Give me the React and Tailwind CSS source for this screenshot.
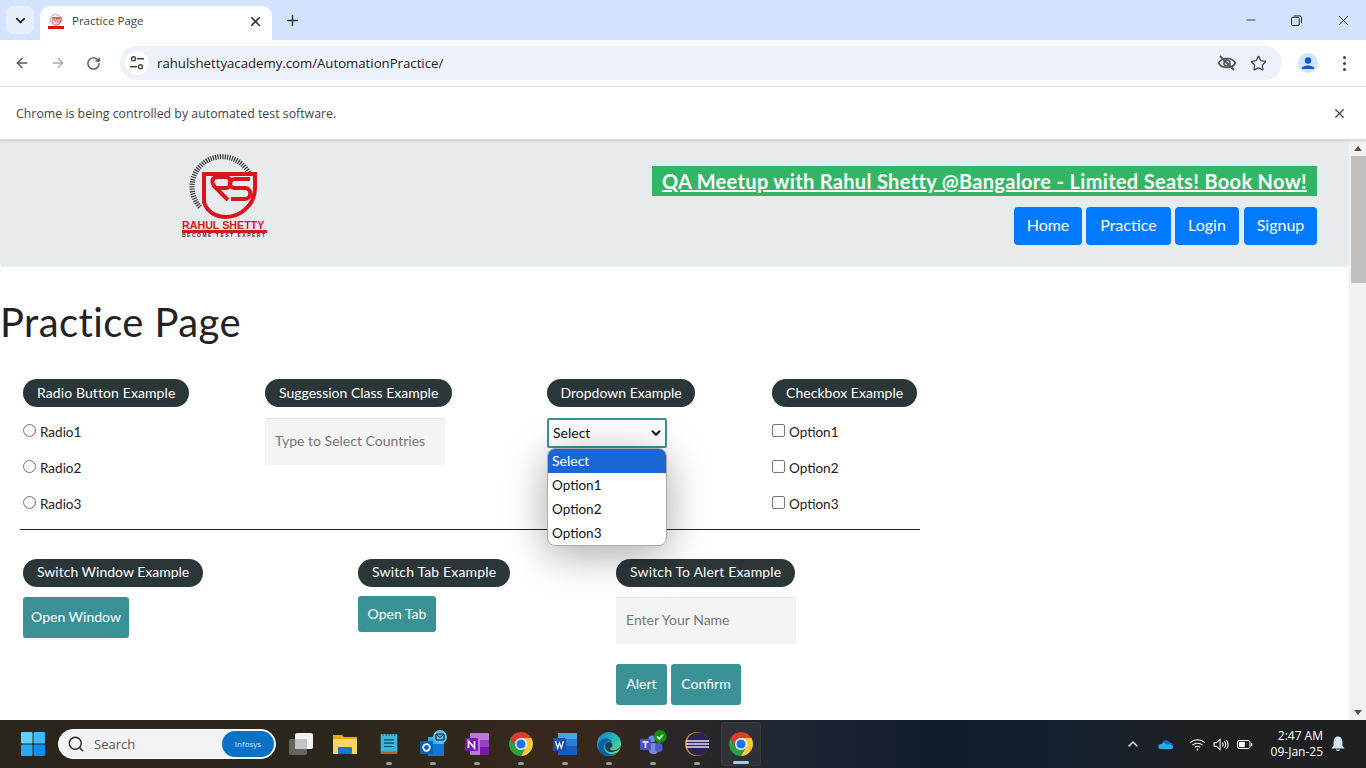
import { useState } from "react";
import { ArrowLeft, ArrowRight, ChevronDown, ChevronUp, Plus, RotateCw, Star, X, Minus, Search } from "lucide-react";

const pageFont = "font-['Lato',sans-serif]";

/* ---------- drawn icons ---------- */
const LogoMark = ({ className }) => (
  <svg viewBox="0 0 90 70" className={className}>
    <path d="M20 57 A30 30 0 1 1 72 35" fill="none" stroke="#333" strokeWidth="5" strokeDasharray="1.2 1.2" />
    <path d="M24 24 H75 V38 C75 55 60 67 46 67 C36 67 27 62 24 52 Z" fill="#e7ebee" stroke="#d9161d" strokeWidth="4" />
    <path d="M36 38 C30 32 32 27 38 27 H46 C52 27 52 38 46 38 H36 L48 50" fill="none" stroke="#d9161d" strokeWidth="4" />
    <path d="M70 29 H55 C48 29 48 38 55 38 H65 C72 38 72 49 65 49 H51" fill="none" stroke="#d9161d" strokeWidth="4" />
  </svg>
);

const Logo = () => (
  <div className="w-[90px] flex flex-col items-start font-['Liberation_Sans',sans-serif]">
    <LogoMark className="w-[90px] h-[70px] shrink-0" />
    <span className="ml-[2px] h-[10px] leading-[11px] text-[10.7px] font-bold text-[#d9161d] whitespace-nowrap">RAHUL SHETTY</span>
    <span className="ml-[2px] w-[85px] h-[3px] bg-[#d9161d]" />
    <span className="ml-[2px] h-[5px] leading-[5px] text-[5px] font-bold text-[#333] tracking-[1.5px] whitespace-nowrap">BECOME TEST EXPERT</span>
  </div>
);

const Favicon = () => (
  <div className="w-4 h-4 flex flex-col shrink-0">
    <LogoMark className="w-4 h-[13px]" />
    <span className="w-4 h-[3px] bg-[#d9161d]" />
  </div>
);

const ChromeIcon = ({ size = 24 }) => (
  <svg viewBox="0 0 24 24" width={size} height={size}>
    <path d="M22.39 6 A12 12 0 0 0 1.61 6 L7 15 L12 12 L12 6 Z" fill="#e33b2e" />
    <path d="M1.61 6 A12 12 0 0 0 12 24 L17 15 L12 12 L7 15 Z" fill="#2c9f45" />
    <path d="M12 24 A12 12 0 0 0 22.39 6 H12 L12 12 L17 15 Z" fill="#fcc934" />
    <circle cx="12" cy="12" r="6" fill="#fff" />
    <circle cx="12" cy="12" r="4.6" fill="#1a73e8" />
  </svg>
);

const TuneIcon = () => (
  <svg viewBox="0 0 16 16" className="w-4 h-4" fill="none" stroke="#444" strokeWidth="1.4">
    <circle cx="4.5" cy="3.8" r="2" />
    <path d="M8 3.8 H15 M1 11.8 H8" />
    <circle cx="11.5" cy="11.8" r="2" />
  </svg>
);

const EyeOffIcon = () => (
  <svg viewBox="0 0 20 20" className="w-5 h-5" fill="none" stroke="#555" strokeWidth="1.6">
    <path d="M1.5 10 C5 4 15 4 18.5 10 C15 16 5 16 1.5 10 Z" />
    <circle cx="10" cy="10" r="3" />
    <path d="M3 3 L17 17" strokeWidth="2" />
  </svg>
);

const WinRestore = () => (
  <svg viewBox="0 0 12 12" className="w-[11px] h-[11px]" fill="none" stroke="#111" strokeWidth="1">
    <rect x="0.5" y="2.5" width="8.5" height="9" rx="1.5" />
    <path d="M3 1 H9.5 A2 2 0 0 1 11.5 3 V9" />
  </svg>
);

const UserIcon = () => (
  <div className="w-5 h-5 rounded-full bg-[#d3e3fd] flex items-center justify-center">
    <svg viewBox="0 0 20 20" className="w-5 h-5" fill="#0b57d0">
      <circle cx="10" cy="7.5" r="3.2" />
      <path d="M3.8 15 C4.5 11.6 15.5 11.6 16.2 15 V16 H3.8 Z" />
    </svg>
  </div>
);

const WindowsIcon = () => (
  <svg viewBox="0 0 24 24" className="w-6 h-6">
    <rect x="0" y="0" width="11.5" height="11.5" rx="1" fill="#5fd0fb" />
    <rect x="12.5" y="0" width="11.5" height="11.5" rx="1" fill="#3bbcf8" />
    <rect x="0" y="12.5" width="11.5" height="11.5" rx="1" fill="#2aa9f5" />
    <rect x="12.5" y="12.5" width="11.5" height="11.5" rx="1" fill="#0f8ff0" />
  </svg>
);

const TaskViewIcon = () => (
  <svg viewBox="0 0 24 24" className="w-6 h-6">
    <rect x="6" y="1" width="18" height="16" rx="2" fill="#f2f2f2" />
    <rect x="0" y="7" width="18" height="16" rx="2" fill="#6d6d6d" fillOpacity="0.9" />
    <rect x="6" y="7" width="12" height="10" fill="#c4c4c4" />
  </svg>
);

const FolderIcon = () => (
  <svg viewBox="0 0 24 24" className="w-6 h-6">
    <path d="M0 3 H9 L11 5 H24 V22 H0 Z" fill="#e8a910" />
    <rect x="0" y="7" width="24" height="15" rx="1" fill="#fcd661" />
    <rect x="5" y="15" width="14" height="7" rx="1" fill="#1479c9" />
  </svg>
);

const NotepadIcon = () => (
  <svg viewBox="0 0 24 28" className="w-[20px] h-6">
    <rect x="2" y="2" width="20" height="23" rx="1" fill="#3cb4dc" />
    <rect x="2" y="23" width="20" height="3" fill="#a8672c" />
    <path d="M5 1 V4 M8.5 1 V4 M12 1 V4 M15.5 1 V4 M19 1 V4" stroke="#0d4a60" strokeWidth="1.2" />
    <path d="M6 9 H18 M6 13 H18 M6 17 H18" stroke="#0d4a60" strokeWidth="1.4" />
  </svg>
);

const OutlookIcon = () => (
  <svg viewBox="0 0 28 28" className="w-7 h-7">
    <rect x="9" y="7" width="16" height="10" fill="#28a8ea" />
    <path d="M9 14 L25 14 V26 H9 Z" fill="#0f78d4" />
    <rect x="1" y="11" width="13" height="13" rx="1" fill="#0a64ad" />
    <circle cx="7.5" cy="17.5" r="3.3" fill="none" stroke="#fff" strokeWidth="1.7" />
    <circle cx="21" cy="7" r="7" fill="#59c6f2" />
    <rect x="17" y="4" width="8" height="6" rx="1" fill="none" stroke="#111" strokeWidth="1.1" />
    <path d="M17.5 4.5 L21 7.5 L24.5 4.5" fill="none" stroke="#111" strokeWidth="1" />
  </svg>
);

const OneNoteIcon = () => (
  <svg viewBox="0 0 24 24" className="w-6 h-6">
    <rect x="5" y="1" width="19" height="22" rx="1" fill="#ba77dd" />
    <rect x="15" y="8" width="9" height="7" fill="#9a3fc0" />
    <rect x="15" y="15" width="9" height="8" fill="#7719aa" />
    <rect x="0" y="6" width="13" height="13" rx="1" fill="#7719aa" />
    <path d="M3.5 16 V9 L9.5 16 V9" fill="none" stroke="#fff" strokeWidth="1.6" />
  </svg>
);

const WordIcon = () => (
  <svg viewBox="0 0 24 24" className="w-6 h-6">
    <rect x="5" y="1" width="19" height="6" fill="#41a5ee" />
    <rect x="5" y="7" width="19" height="7" fill="#2b7cd3" />
    <rect x="5" y="14" width="19" height="9" fill="#185abd" />
    <rect x="0" y="6" width="13" height="13" rx="1" fill="#1a4ea8" />
    <path d="M2.5 9 L4.7 16 L6.5 11 L8.3 16 L10.5 9" fill="none" stroke="#fff" strokeWidth="1.3" />
  </svg>
);

const EdgeIcon = () => (
  <svg viewBox="0 0 24 24" className="w-6 h-6">
    <defs>
      <linearGradient id="edgeTop" x1="0" y1="0" x2="1" y2="1">
        <stop offset="0" stopColor="#0c7fd0" />
        <stop offset="0.6" stopColor="#2fc3b0" />
        <stop offset="1" stopColor="#7fe06a" />
      </linearGradient>
    </defs>
    <circle cx="12" cy="12" r="12" fill="url(#edgeTop)" />
    <path d="M1 13 C3 5 13 4 15 11 C14 9 8 8 7 14 C6 20 14 25 20 20 C15 27 1 25 1 13 Z" fill="#0c5ea8" />
    <path d="M8 14 C8 9 15 9 15.5 13 C16 16 12 15 13 17 C14 19 20 19 24 14 C22 21 8 23 8 14 Z" fill="#2b3a4a" />
  </svg>
);

const TeamsIcon = () => (
  <svg viewBox="0 0 30 28" className="w-[30px] h-7">
    <circle cx="14" cy="9" r="3.5" fill="#7b83eb" />
    <circle cx="21" cy="10" r="2.6" fill="#5059c9" />
    <rect x="11" y="13" width="9" height="11" rx="4" fill="#7b83eb" />
    <rect x="17" y="13" width="7.5" height="9" rx="3.5" fill="#5059c9" />
    <rect x="2" y="9" width="11" height="11" rx="1" fill="#4b53bc" />
    <path d="M4.5 12 H10.5 M7.5 12 V18" stroke="#fff" strokeWidth="1.5" />
    <circle cx="22" cy="6.5" r="6.5" fill="#12900f" />
    <path d="M19 6.5 L21.3 8.8 L25 4.8" fill="none" stroke="#fff" strokeWidth="1.5" />
  </svg>
);

const EclipseIcon = () => (
  <svg viewBox="0 0 24 24" className="w-6 h-6">
    <circle cx="12" cy="12" r="12" fill="#e08a1e" />
    <circle cx="13" cy="12" r="11.5" fill="#2c2255" />
    <path d="M1 9 H24 M1 12 H24 M1 15 H24" stroke="#e5e0f0" strokeWidth="1.6" />
  </svg>
);

const OneDriveIcon = () => (
  <svg viewBox="0 0 20 14" className="w-4 h-[11px]">
    <path d="M5 5 C6 1 12 0 14 4 C17 4 19 6 18.5 8 H8 Z" fill="#0f6cbd" />
    <path d="M3.5 13 C-1 13 -1 6.5 4 6.5 C6 4 10 5 11 7 C14 6 19 7 19 10 C19 12 18 13 16 13 Z" fill="#28a8ea" />
  </svg>
);

const WifiIcon = () => (
  <svg viewBox="0 0 18 14" className="w-[17px] h-[13px]" fill="none" stroke="#fff" strokeWidth="1.1">
    <path d="M1 5 C5.5 0.8 12.5 0.8 17 5" />
    <path d="M3.5 7.6 C6.5 5 11.5 5 14.5 7.6" />
    <path d="M6 10 C7.8 8.7 10.2 8.7 12 10" />
    <circle cx="9" cy="12.4" r="1" fill="#fff" stroke="none" />
  </svg>
);

const VolumeIcon = () => (
  <svg viewBox="0 0 18 14" className="w-[17px] h-[13px]" fill="none" stroke="#fff" strokeWidth="1.1">
    <path d="M1 5 H3.5 L7.5 1.5 V12.5 L3.5 9 H1 Z" />
    <path d="M10 5 C11 6.2 11 7.8 10 9 M12 3.5 C13.8 5.5 13.8 8.5 12 10.5 M14 2 C16.6 5 16.6 9 14 12" />
  </svg>
);

const BatteryIcon = () => (
  <svg viewBox="0 0 18 12" className="w-4 h-[11px]" fill="none" stroke="#fff" strokeWidth="1.1">
    <rect x="0.6" y="1.5" width="14" height="9" rx="2" />
    <rect x="2.2" y="3" width="6.5" height="6" fill="#fff" stroke="none" />
    <path d="M16.4 4.5 V7.5" strokeWidth="1.5" />
  </svg>
);

const BellIcon = () => (
  <svg viewBox="0 0 14 16" className="w-[14px] h-4" fill="#cfe6f2">
    <path d="M7 0.5 C10 0.5 11.4 3 11.4 6 V9.5 L13.5 12.5 H0.5 L2.6 9.5 V6 C2.6 3 4 0.5 7 0.5 Z" />
    <path d="M5 13.5 H9 C8.8 15.5 5.2 15.5 5 13.5 Z" />
  </svg>
);

/* ---------- browser chrome ---------- */
const TabBar = () => (
  <div className="h-10 bg-[#d3e3fd] flex items-end shrink-0 font-['Open_Sans',sans-serif]">
    <div className="w-7 h-7 ml-[6px] mb-[6px] rounded-lg bg-[#e7effd] flex items-center justify-center">
      <ChevronDown size={15} strokeWidth={2.6} className="text-[#222]" />
    </div>
    <div className="w-[232px] h-[34px] ml-[6px] bg-white rounded-t-[10px] flex items-center pl-2 pr-[9px] pb-1">
      <Favicon />
      <span className="ml-2 text-[11.5px] text-[#444] flex-1">Practice Page</span>
      <X size={15} strokeWidth={2.4} className="text-[#222]" />
    </div>
    <Plus size={17} strokeWidth={2} className="text-[#333] ml-3 mb-[11px]" />
    <div className="flex-1" />
    <div className="flex items-center self-stretch">
      <Minus size={14} strokeWidth={1.3} className="text-[#111] mr-[33px]" />
      <div className="mr-[33px]"><WinRestore /></div>
      <X size={17} strokeWidth={1.2} className="text-[#111] mr-[14px]" />
    </div>
  </div>
);

const Toolbar = () => (
  <div className="h-[47px] bg-white border-b border-[#e0e0e0] rounded-tr-lg flex items-center shrink-0 font-['Open_Sans',sans-serif]">
    <ArrowLeft size={16} strokeWidth={2} className="text-[#555] ml-[14px]" />
    <ArrowRight size={16} strokeWidth={2} className="text-[#aaa] ml-5" />
    <RotateCw size={15} strokeWidth={2.2} className="text-[#555] ml-[20px]" />
    <div className="ml-[19px] w-[1162px] h-[34px] rounded-full bg-[#ecf1fa] flex items-center pl-[5px] pr-[15px]">
      <div className="w-6 h-6 rounded-full bg-white flex items-center justify-center"><TuneIcon /></div>
      <span className="ml-2 pt-[1px] text-[13.2px] text-[#222] flex-1">rahulshettyacademy.com/AutomationPractice/</span>
      <EyeOffIcon />
      <Star size={17} strokeWidth={1.8} className="text-[#444] ml-[13px]" />
    </div>
    <div className="ml-4"><UserIcon /></div>
    <div className="ml-[25px] flex flex-col gap-[3px]">
      <span className="w-[3px] h-[3px] rounded-full bg-[#444]" />
      <span className="w-[3px] h-[3px] rounded-full bg-[#444]" />
      <span className="w-[3px] h-[3px] rounded-full bg-[#444]" />
    </div>
  </div>
);

const InfoBar = () => (
  <div className="h-[53px] bg-white border-b border-[#dcdcdc] flex items-center justify-between pl-4 pr-[19px] shrink-0 font-['Open_Sans',sans-serif] shadow-[0_1px_2px_rgba(0,0,0,0.15)] relative z-10">
    <span className="text-[12.35px] text-[#444] pt-[2px]">Chrome is being controlled by automated test software.</span>
    <X size={15} strokeWidth={2} className="text-[#444]" />
  </div>
);

/* ---------- page ---------- */
const Pill = ({ children, className = "" }) => (
  <div className={`inline-flex items-center justify-center h-7 rounded-full bg-[#2b3638] text-white text-sm whitespace-nowrap ${className}`}>
    {children}
  </div>
);

const TealButton = ({ children, className = "" }) => (
  <button className={`bg-[#3a9297] text-white text-sm rounded-[3px] ${className}`}>{children}</button>
);

const NavButton = ({ children, className = "" }) => (
  <button className={`h-[38px] rounded bg-[#007bff] text-white text-base pb-[2px] ${className}`}>{children}</button>
);

const radios = ["Radio1", "Radio2", "Radio3"];
const checks = ["Option1", "Option2", "Option3"];

const ChoiceList = ({ items, box }) => (
  <div className="flex flex-col gap-[18px] mt-4">
    {items.map((label) => (
      <div key={label} className="h-[18px] flex items-center text-[13.5px] text-[#222]">
        <span className={`w-[13px] h-[13px] border border-[#767676] bg-white -mt-[3px] ${box ? "rounded-[2px]" : "rounded-full"}`} />
        <span className="ml-1">{label}</span>
      </div>
    ))}
  </div>
);

const Dropdown = () => {
  const [value] = useState("Select");
  return (
    <div className="relative mt-[11px] w-[120px]">
      <div className="h-[30px] border-2 border-[#3a9297] rounded-[2px] bg-white flex items-center justify-between pl-1 pr-[2px] text-sm text-[#111]">
        <span>{value}</span>
        <ChevronDown size={14} strokeWidth={3.4} className="text-[#111]" />
      </div>
      <div className="absolute z-20 left-0 top-[30px] w-[120px] h-[98px] bg-white rounded-lg border border-[#aaa] overflow-hidden text-[13.5px] text-[#111] shadow-[0_8px_40px_rgba(0,0,0,0.35)]">
        <div className="h-6 pl-1 flex items-center bg-[#1b66d6] text-white text-sm">Select</div>
        {checks.map((o) => (
          <div key={o} className="h-6 pl-1 flex items-center">{o}</div>
        ))}
      </div>
    </div>
  );
};

const Header = () => (
  <div className="h-[127px] bg-[#e7ebee] rounded-b-[4px] flex justify-between shrink-0">
    <div className="ml-[180px] mt-[10px]"><Logo /></div>
    <div className="mr-[32px] mt-[26px] flex flex-col items-end">
      <a className="h-[30px] px-[10px] bg-[#33b566] text-white text-[20px] font-bold leading-[30px] tracking-[0.33px] underline whitespace-nowrap">
        QA Meetup with Rahul Shetty @Bangalore - Limited Seats! Book Now!
      </a>
      <div className="flex gap-1 mt-[11px]">
        <NavButton className="w-[68px]">Home</NavButton>
        <NavButton className="w-[85px]">Practice</NavButton>
        <NavButton className="w-[64px]">Login</NavButton>
        <NavButton className="w-[73px] ml-[1px]">Signup</NavButton>
      </div>
    </div>
  </div>
);

const inputClass = "block w-[180px] h-[47px] px-[10px] pb-[2px] bg-[#f4f4f4] rounded-[2px] text-sm placeholder:text-[#777] shadow-[inset_0_1px_1px_rgba(0,0,0,0.06)]";

const Practice = () => (
  <div className={`flex-1 min-w-0 overflow-hidden bg-white ${pageFont}`}>
    <Header />
    <h1 className="text-[40px] leading-[48px] tracking-[0.4px] text-[#222] mt-[31px]">Practice Page</h1>
    <div className="ml-5 w-[900px] mt-[33px]">
      <div className="pl-[3px] h-[151px] border-b border-[#222] flex items-start">
        <div className="w-[242px]">
          <Pill className="px-[14px] tracking-[0.1px]">Radio Button Example</Pill>
          <ChoiceList items={radios} />
        </div>
        <div className="w-[282px]">
          <Pill className="px-[14px]">Suggession Class Example</Pill>
          <input placeholder="Type to Select Countries" className={`mt-[11px] ${inputClass}`} />
        </div>
        <div className="w-[225px]">
          <Pill className="px-[13.5px]">Dropdown Example</Pill>
          <Dropdown />
        </div>
        <div>
          <Pill className="px-[14px] tracking-[0.05px]">Checkbox Example</Pill>
          <ChoiceList items={checks} box />
        </div>
      </div>
      <div className="pl-[3px] mt-[29px] flex items-start">
        <div className="w-[335px]">
          <Pill className="px-[14px] pb-[2px]">Switch Window Example</Pill>
          <TealButton className="block mt-[10px] w-[106px] h-[41px] pb-[2px]">Open Window</TealButton>
        </div>
        <div className="w-[258px]">
          <Pill className="px-[14px] pb-[2px] tracking-[0.15px]">Switch Tab Example</Pill>
          <TealButton className="block mt-[9px] w-[78px] h-9">Open Tab</TealButton>
        </div>
        <div>
          <Pill className="px-[14px] pb-[2px] tracking-[0.15px]">Switch To Alert Example</Pill>
          <input placeholder="Enter Your Name" className={`mt-[10px] ${inputClass}`} />
          <div className="flex gap-1 mt-5">
            <TealButton className="w-[51px] h-[41px] pb-[2px]">Alert</TealButton>
            <TealButton className="w-[70px] h-[41px] pb-[2px]">Confirm</TealButton>
          </div>
        </div>
      </div>
    </div>
  </div>
);

const Scrollbar = () => (
  <div className="w-[17px] bg-[#f1f1f1] flex flex-col items-end shrink-0">
    <div className="w-full h-[16px] flex items-center justify-center">
      <div className="w-0 h-0 border-x-[4px] border-x-transparent border-b-[5px] border-b-[#505050]" />
    </div>
    <div className="w-[15px] h-[127px] bg-[#c1c1c1]" />
    <div className="flex-1" />
    <div className="w-full h-[16px] flex items-center justify-center">
      <div className="w-0 h-0 border-x-[4px] border-x-transparent border-t-[5px] border-t-[#505050]" />
    </div>
  </div>
);

/* ---------- taskbar ---------- */
const TaskIcon = ({ children, dot = true, active }) => (
  <div className={`relative h-11 flex items-center justify-center rounded ${active ? "w-10 mx-[2px] bg-white/5 border border-white/5" : "w-11"}`}>
    {children}
    {dot && (
      <span className={`absolute bottom-[1px] left-1/2 -translate-x-1/2 h-[3px] rounded-full ${active ? "w-4 bg-[#a8cbe0]" : "w-[6px] bg-[#9a9a9a]"}`} />
    )}
  </div>
);

const Taskbar = () => (
  <div className="h-12 shrink-0 flex items-center bg-[linear-gradient(90deg,#2a261c_0%,#2b271c_25%,#38281c_42%,#1d2632_58%,#111c30_68%,#14202f_78%,#1f2022_88%,#1f2022_100%)] font-['Open_Sans',sans-serif]">
    <div className="w-[58px] pl-[21px]"><WindowsIcon /></div>
    <div className="w-[218px] h-[30px] rounded-full bg-[#f3f3f3] flex items-center pl-2 pr-[1px] border border-white">
      <Search size={18} strokeWidth={1.8} className="text-[#222]" />
      <span className="ml-[9px] pt-[1px] text-[13px] text-[#555] flex-1">Search</span>
      <span className="w-[52px] h-[26px] rounded-full bg-[#0a72c4] text-white/80 text-[8px] flex items-center justify-center">Infosys</span>
    </div>
    <div className="flex ml-[3px]">
      <TaskIcon dot={false}><TaskViewIcon /></TaskIcon>
      <TaskIcon dot={false}><FolderIcon /></TaskIcon>
      <TaskIcon><NotepadIcon /></TaskIcon>
      <TaskIcon><OutlookIcon /></TaskIcon>
      <TaskIcon><OneNoteIcon /></TaskIcon>
      <TaskIcon><ChromeIcon /></TaskIcon>
      <TaskIcon><WordIcon /></TaskIcon>
      <TaskIcon><EdgeIcon /></TaskIcon>
      <TaskIcon><TeamsIcon /></TaskIcon>
      <TaskIcon><EclipseIcon /></TaskIcon>
      <TaskIcon active><ChromeIcon /></TaskIcon>
    </div>
    <div className="flex-1" />
    <ChevronUp size={16} strokeWidth={2} className="text-white" />
    <div className="ml-[17px]"><OneDriveIcon /></div>
    <div className="ml-[15px]"><WifiIcon /></div>
    <div className="ml-[7px]"><VolumeIcon /></div>
    <div className="ml-[7px]"><BatteryIcon /></div>
    <div className="ml-[8px] w-[62px] flex flex-col items-end text-[12px] leading-[16px] text-white">
      <span>2:47 AM</span>
      <span>09-Jan-25</span>
    </div>
    <div className="ml-[8px] mr-[21px]"><BellIcon /></div>
  </div>
);

const App = () => (
  <div className="h-screen w-full flex flex-col overflow-hidden bg-white">
    <TabBar />
    <Toolbar />
    <InfoBar />
    <div className="flex-1 min-h-0 flex">
      <Practice />
      <Scrollbar />
    </div>
    <Taskbar />
  </div>
);

export default App;
